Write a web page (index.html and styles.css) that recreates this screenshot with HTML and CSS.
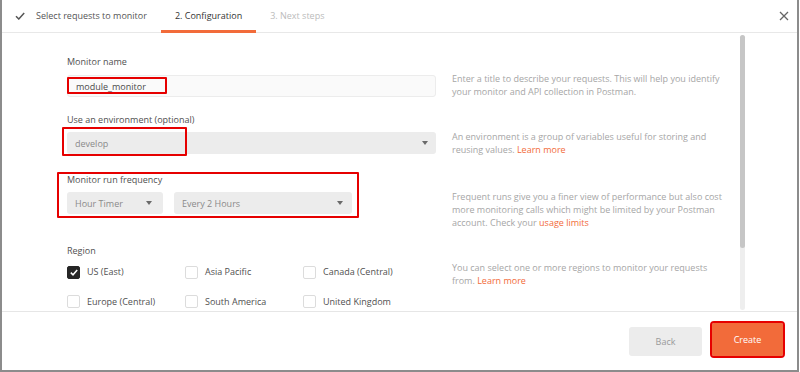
FILE: index.html
```html
<!DOCTYPE html>
<html lang="en">
<head>
    <meta charset="UTF-8">
    <meta name="viewport" content="width=device-width, initial-scale=1.0">
    <title>Create a monitor</title>
    <link rel="stylesheet" href="styles.css">
</head>
<body>
<div class="modal">
    <header class="tabs">
        <div class="tab tab-done">
            <svg class="check" width="10" height="8" viewBox="0 0 10 8"><polyline points="1,4.2 3.8,7 9.2,1" fill="none" stroke="#555" stroke-width="1.5"/></svg>
            Select requests to monitor
        </div>
        <div class="tab tab-active">2. Configuration</div>
        <div class="tab tab-next">3. Next steps</div>
        <div class="close">
            <svg width="10" height="10" viewBox="0 0 10 10"><path d="M1 1L9 9M9 1L1 9" stroke="#666" stroke-width="1.3"/></svg>
        </div>
    </header>

    <main class="content">
        <div class="form">
            <div class="row">
                <div class="field">
                    <label class="label">Monitor name</label>
                    <div class="input">
                        module_monitor
                        <span class="mark mark-name"></span>
                    </div>
                </div>
                <p class="desc">Enter a title to describe your requests. This will help you identify your monitor and API collection in Postman.</p>
            </div>

            <div class="row row-env">
                <div class="field">
                    <label class="label">Use an environment (optional)</label>
                    <div class="select">
                        develop <span class="arrow"></span>
                        <span class="mark mark-env"></span>
                    </div>
                </div>
                <p class="desc">An environment is a group of variables useful for storing and reusing values. <a href="#">Learn more</a></p>
            </div>

            <div class="row">
                <div class="field field-freq">
                    <label class="label">Monitor run frequency</label>
                    <div class="freq">
                        <div class="select select-timer">Hour Timer <span class="arrow"></span></div>
                        <div class="select select-every">Every 2 Hours <span class="arrow"></span></div>
                    </div>
                    <span class="mark mark-freq"></span>
                </div>
                <p class="desc">Frequent runs give you a finer view of performance but also cost more monitoring calls which might be limited by your Postman account. Check your <a href="#">usage limits</a></p>
            </div>

            <div class="row">
                <div class="field">
                    <label class="label">Region</label>
                    <div class="regions">
                        <div class="region"><span class="box box-on"><svg width="8" height="7" viewBox="0 0 8 7"><polyline points="0.8,3.6 3,5.8 7.2,1" fill="none" stroke="#fff" stroke-width="1.5"/></svg></span>US (East)</div>
                        <div class="region"><span class="box"></span>Asia Pacific</div>
                        <div class="region"><span class="box"></span>Canada (Central)</div>
                        <div class="region"><span class="box"></span>Europe (Central)</div>
                        <div class="region"><span class="box"></span>South America</div>
                        <div class="region"><span class="box"></span>United Kingdom</div>
                    </div>
                </div>
                <p class="desc">You can select one or more regions to monitor your requests from. <a href="#">Learn more</a></p>
            </div>
        </div>
        <div class="scrollbar"><div class="thumb"></div></div>
    </main>

    <footer class="actions">
        <button class="btn btn-back">Back</button>
        <button class="btn btn-create">Create</button>
    </footer>
</div>
</body>
</html>
```

FILE: styles.css
```css
body{
    margin: 0;
    background: white;
    font-family: "Open Sans", "DejaVu Sans", sans-serif;
    font-size: 9px;
    color: #505050;
}

.modal{
    width: 799px;
    height: 372px;
    box-sizing: border-box;
    border-left: 2px solid #8c8c8c;
    border-right: 2px solid #8c8c8c;
    border-bottom: 2px solid #8c8c8c;
    display: flex;
    flex-direction: column;
}

/* tabs */
.tabs{
    height: 33px;
    box-sizing: border-box;
    border-bottom: 1px solid #e8e8e8;
    display: flex;
    flex-shrink: 0;
}

.tab{
    display: flex;
    align-items: center;
    padding: 1px 14px 0 13px;
    border-bottom: 3px solid transparent;
    margin-bottom: -1px;
    color: #555;
}

.tab-done .check{
    margin-right: 11px;
}

.tab-active{
    color: #333;
    padding-left: 14px;
    border-bottom-color: #f26b3a;
}

.tab-next{
    color: #bbb;
    padding-left: 14px;
}

.close{
    margin-left: auto;
    margin-right: 8px;
    display: flex;
    align-items: center;
}

/* content */
.content{
    height: 278px;
    overflow: hidden;
    display: flex;
    flex-shrink: 0;
}

.form{
    flex: 1;
    padding: 22px 0 0 65px;
}

.row{
    display: flex;
    margin-bottom: 14px;
}

.row-env{
    margin-bottom: 16px;
}

.field{
    width: 369px;
    flex-shrink: 0;
    position: relative;
}

.label{
    display: block;
    line-height: 13.5px;
    margin-bottom: 6px;
}

.input{
    position: relative;
    height: 22px;
    box-sizing: border-box;
    border: 1px solid #ececec;
    border-radius: 3px;
    background: #fafafa;
    padding: 0 8px;
    line-height: 22px;
    color: #4a4a4a;
}

.select{
    position: relative;
    height: 22px;
    box-sizing: border-box;
    border-radius: 3px;
    background: #ececec;
    padding: 0 8px;
    display: flex;
    justify-content: space-between;
    align-items: center;
    color: #8a8a8a;
}

.arrow{
    width: 0;
    height: 0;
    border-left: 3.5px solid transparent;
    border-right: 3.5px solid transparent;
    border-top: 4px solid #6a6a6a;
}

.freq{
    display: flex;
    gap: 11px;
}

.select-timer{
    width: 96px;
    padding-right: 11px;
}

.select-every{
    width: 178px;
    padding-right: 9px;
}

.desc{
    margin: 0 0 0 16px;
    padding-top: 17px;
    width: 275px;
    line-height: 13.4px;
    color: #a6a6a6;
}

.desc a{
    color: #f26b3a;
    text-decoration: none;
}

/* regions */
.regions{
    display: grid;
    grid-template-columns: repeat(3, 118px);
    row-gap: 16px;
    margin-top: 8px;
}

.region{
    display: flex;
    align-items: center;
    gap: 7px;
    line-height: 13.5px;
}

.box{
    width: 13px;
    height: 13px;
    box-sizing: border-box;
    border: 1px solid #dcdcdc;
    border-radius: 2px;
    display: flex;
    align-items: center;
    justify-content: center;
}

.box-on{
    background: #262626;
    border-color: #262626;
}

/* red marks drawn over the screenshot */
.mark{
    position: absolute;
    box-sizing: border-box;
    border: 2px solid #e60000;
    border-radius: 1px;
}

.mark-name{
    left: -1px;
    top: 1px;
    width: 100px;
    height: 17px;
}

.mark-env{
    left: -5px;
    top: -5px;
    width: 125px;
    height: 29px;
}

.mark-freq{
    left: -10px;
    top: -1px;
    width: 302px;
    height: 46px;
}

.scrollbar{
    width: 5px;
    height: 275px;
    margin: 2px 52px 0 0;
    border-radius: 3px;
    background: #eeeeee;
}

.thumb{
    height: 213px;
    border-radius: 3px;
    background: #c6c6c6;
}

/* footer */
.actions{
    flex: 1;
    border-top: 1px solid #e6e6e6;
    display: flex;
    justify-content: flex-end;
    align-items: flex-end;
    gap: 10px;
    padding: 0 14px 14px 0;
}

.btn{
    border: none;
    border-radius: 3px;
    font-family: "Open Sans", "DejaVu Sans", sans-serif;
    font-size: 9px;
    cursor: pointer;
}

.btn-back{
    width: 73px;
    height: 29px;
    background: #ececec;
    color: #9a9a9a;
}

.btn-create{
    width: 71px;
    height: 33px;
    border-radius: 2px;
    background: #f26b3a;
    color: white;
    outline: 2px solid #e60000;
}
```
